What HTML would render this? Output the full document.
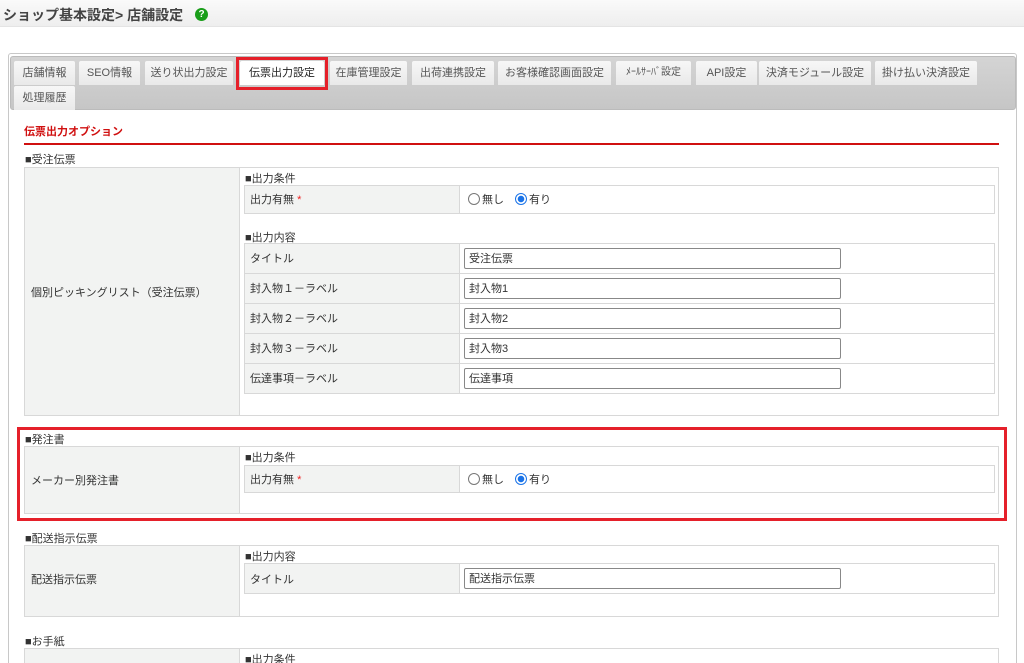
<!DOCTYPE html>
<html><head><meta charset="utf-8">
<style>
*{margin:0;padding:0;box-sizing:border-box}
html,body{width:1024px;height:663px;overflow:hidden}
body{background:#fff;font-family:"Liberation Sans","Noto Sans CJK JP",sans-serif;font-size:11px;color:#333;position:relative}
.a{position:absolute}
.hdr{left:0;top:0;width:1024px;height:27px;background:linear-gradient(#fafafa,#eee);border-bottom:1px solid #e4e4e4}
.ttl{left:3px;top:5px;font-size:14px;font-weight:bold;color:#444;white-space:nowrap}
.q{left:195px;top:8px;width:13px;height:13px;border-radius:50%;background:#1a9e1a;color:#fff;font-size:10px;font-weight:bold;text-align:center;line-height:13px}
.panel{left:8px;top:53px;width:1009px;height:620px;border:1px solid #c8c8c8;border-radius:3px}
.tabbar{left:10px;top:56px;width:1006px;height:54px;background:linear-gradient(#d4d4d4,#c6c6c6);border:1px solid #bbb;border-radius:3px}
.tab{height:24px;background:linear-gradient(#f7f7f7,#e9e9e9);color:#555;text-align:center;line-height:24px;font-size:11px;border-radius:2px 2px 0 0;white-space:nowrap}
.act{background:#fff;color:#222}
.redbox{border:3px solid #e5202a}
.sec{left:24px;top:123px;color:#d01010;font-weight:bold;font-size:11px}
.rline{left:24px;top:143px;width:975px;height:2px;background:#d01010}
.lbl{font-size:11px;color:#333;white-space:nowrap}
.tbl{border:1px solid #d8d8d8;background:#fff}
.lc{background:#f2f3f2;border-right:1px solid #d8d8d8}
.row{border:1px solid #d8d8d8;background:#fff}
.rl{background:#f2f3f2;border-right:1px solid #d8d8d8}
.inp{height:21px;width:377px;border:1px solid #888;border-radius:2px;padding-left:4px;line-height:21px;background:#fff}
.rad{width:12px;height:12px;border:1px solid #777;border-radius:50%;display:inline-block;vertical-align:-2px;margin-right:2px;background:#fff}
.rad.on{border-color:#1a73e8;background:radial-gradient(#1a73e8 0 3px,#fff 3.5px)}
.req{color:#e22}
</style></head><body>
<div class="a hdr"></div>
<div class="a ttl">ショップ基本設定&gt; 店舗設定</div>
<div class="a q">?</div>

<div class="a panel"></div>
<div class="a tabbar"></div>
<div class="a tab" style="left:14px;top:61px;width:61px">店舗情報</div>
<div class="a tab" style="left:79px;top:61px;width:61px">SEO情報</div>
<div class="a tab" style="left:145px;top:61px;width:88px">送り状出力設定</div>
<div class="a tab act" style="left:240px;top:61px;width:84px">伝票出力設定</div>
<div class="a redbox" style="left:236px;top:57px;width:92px;height:33px"></div>
<div class="a tab" style="left:330px;top:61px;width:77px">在庫管理設定</div>
<div class="a tab" style="left:412px;top:61px;width:82px">出荷連携設定</div>
<div class="a tab" style="left:498px;top:61px;width:113px">お客様確認画面設定</div>
<div class="a tab" style="left:616px;top:61px;width:75px;font-size:10px">ﾒｰﾙｻｰﾊﾞ設定</div>
<div class="a tab" style="left:696px;top:61px;width:61px">API設定</div>
<div class="a tab" style="left:759px;top:61px;width:112px">決済モジュール設定</div>
<div class="a tab" style="left:875px;top:61px;width:102px">掛け払い決済設定</div>
<div class="a tab" style="left:14px;top:86px;width:61px">処理履歴</div>

<div class="a sec">伝票出力オプション</div>
<div class="a rline"></div>

<div class="a lbl" style="left:25px;top:151px">■受注伝票</div>
<div class="a tbl" style="left:24px;top:167px;width:975px;height:249px"></div>
<div class="a lc" style="left:25px;top:168px;width:215px;height:247px"></div>
<div class="a lbl" style="left:31px;top:284px">個別ピッキングリスト（受注伝票）</div>
<div class="a lbl" style="left:245px;top:170px">■出力条件</div>
<div class="a row" style="left:244px;top:185px;width:751px;height:29px"></div>
<div class="a rl" style="left:245px;top:186px;width:215px;height:27px"></div>
<div class="a lbl" style="left:250px;top:191px">出力有無 <span class="req">*</span></div>
<div class="a lbl" style="left:468px;top:191px"><span class="rad"></span>無し　<span class="rad on"></span>有り</div>
<div class="a lbl" style="left:245px;top:229px">■出力内容</div>
<div class="a row" style="left:244px;top:243px;width:751px;height:151px"></div>
<div class="a rl" style="left:245px;top:244px;width:215px;height:149px"></div>
<div class="a" style="left:245px;top:273px;width:749px;height:1px;background:#d8d8d8"></div>
<div class="a" style="left:245px;top:303px;width:749px;height:1px;background:#d8d8d8"></div>
<div class="a" style="left:245px;top:333px;width:749px;height:1px;background:#d8d8d8"></div>
<div class="a" style="left:245px;top:363px;width:749px;height:1px;background:#d8d8d8"></div>
<div class="a lbl" style="left:250px;top:250px">タイトル</div>
<div class="a lbl" style="left:250px;top:280px">封入物１－ラベル</div>
<div class="a lbl" style="left:250px;top:310px">封入物２－ラベル</div>
<div class="a lbl" style="left:250px;top:340px">封入物３－ラベル</div>
<div class="a lbl" style="left:250px;top:370px">伝達事項－ラベル</div>
<div class="a inp" style="left:464px;top:248px">受注伝票</div>
<div class="a inp" style="left:464px;top:278px">封入物1</div>
<div class="a inp" style="left:464px;top:308px">封入物2</div>
<div class="a inp" style="left:464px;top:338px">封入物3</div>
<div class="a inp" style="left:464px;top:368px">伝達事項</div>

<div class="a redbox" style="left:17px;top:427px;width:990px;height:94px"></div>
<div class="a lbl" style="left:25px;top:431px">■発注書</div>
<div class="a tbl" style="left:24px;top:446px;width:975px;height:68px"></div>
<div class="a lc" style="left:25px;top:447px;width:215px;height:66px"></div>
<div class="a lbl" style="left:31px;top:472px">メーカー別発注書</div>
<div class="a lbl" style="left:245px;top:449px">■出力条件</div>
<div class="a row" style="left:244px;top:465px;width:751px;height:28px"></div>
<div class="a rl" style="left:245px;top:466px;width:215px;height:26px"></div>
<div class="a lbl" style="left:250px;top:471px">出力有無 <span class="req">*</span></div>
<div class="a lbl" style="left:468px;top:471px"><span class="rad"></span>無し　<span class="rad on"></span>有り</div>

<div class="a lbl" style="left:25px;top:530px">■配送指示伝票</div>
<div class="a tbl" style="left:24px;top:545px;width:975px;height:72px"></div>
<div class="a lc" style="left:25px;top:546px;width:215px;height:70px"></div>
<div class="a lbl" style="left:31px;top:571px">配送指示伝票</div>
<div class="a lbl" style="left:245px;top:548px">■出力内容</div>
<div class="a row" style="left:244px;top:563px;width:751px;height:31px"></div>
<div class="a rl" style="left:245px;top:564px;width:215px;height:29px"></div>
<div class="a lbl" style="left:250px;top:571px">タイトル</div>
<div class="a inp" style="left:464px;top:568px">配送指示伝票</div>

<div class="a lbl" style="left:25px;top:633px">■お手紙</div>
<div class="a tbl" style="left:24px;top:648px;width:975px;height:40px"></div>
<div class="a lc" style="left:25px;top:649px;width:215px;height:38px"></div>
<div class="a lbl" style="left:245px;top:651px">■出力条件</div>
</body></html>
